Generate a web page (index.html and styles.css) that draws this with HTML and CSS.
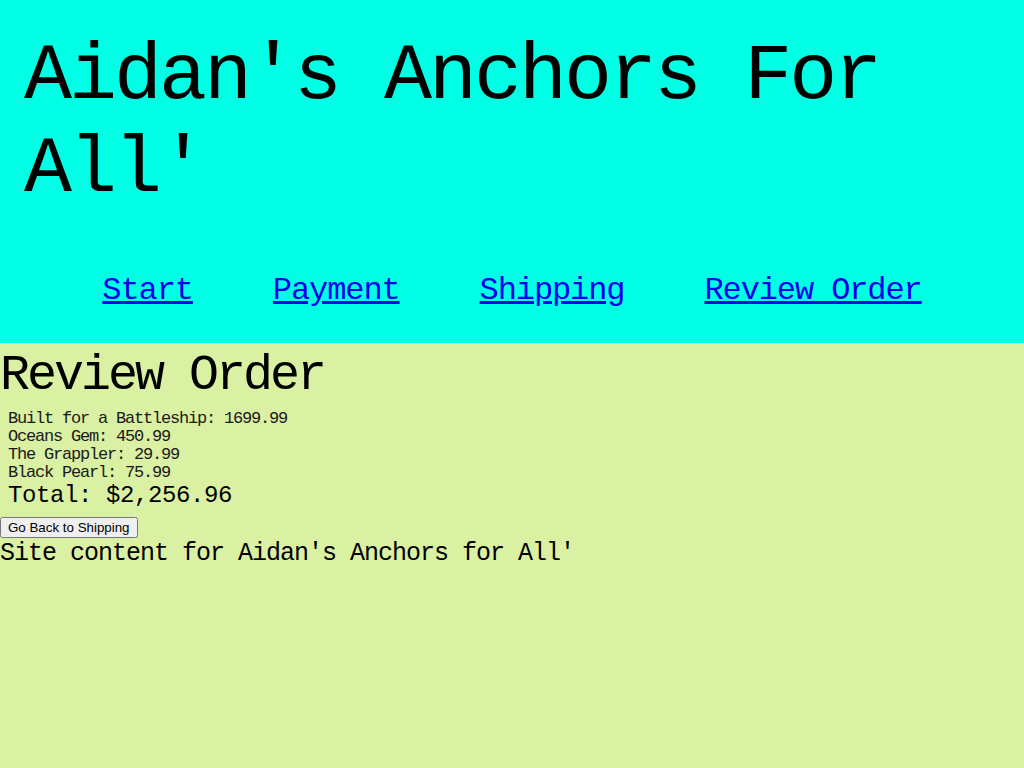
FILE: index.html
```html
<!DOCTYPE html>
<html lang="en">
<head>
<meta charset="utf-8">
<title>Aidan's Anchors For All'</title>
<link rel="stylesheet" href="styles.css">
</head>
<body>
<header class="site-header">
  <h1 class="site-title">Aidan's Anchors For All'</h1>
  <nav class="site-nav">
    <a href="#">Start</a>
    <a href="#">Payment</a>
    <a href="#">Shipping</a>
    <a href="#">Review Order</a>
  </nav>
</header>
<main class="content">
  <h2 class="page-title">Review Order</h2>
  <div class="order">
    <div class="order-item">Built for a Battleship: 1699.99</div>
    <div class="order-item">Oceans Gem: 450.99</div>
    <div class="order-item">The Grappler: 29.99</div>
    <div class="order-item">Black Pearl: 75.99</div>
    <div class="order-total">Total: $2,256.96</div>
  </div>
  <button class="back-btn" type="button">Go Back to Shipping</button>
  <p class="footer-text">Site content for Aidan's Anchors for All'</p>
</main>
</body>
</html>
```
FILE: styles.css
```css
html, body {
  margin: 0;
  padding: 0;
}
body {
  background: #daf0a2;
  font-family: "Liberation Mono", "DejaVu Sans Mono", monospace;
  color: #000;
  min-height: 768px;
}
.site-header {
  background: #00ffe4;
  padding: 30px 0 32px;
}
.site-title {
  margin: 0;
  padding: 0 24px;
  font-size: 80px;
  line-height: 93px;
  letter-spacing: -3px;
  font-weight: normal;
}
.site-nav {
  margin-top: 55px;
  display: flex;
  justify-content: center;
  gap: 80px;
  font-size: 32px;
  line-height: 40px;
  letter-spacing: -1.1px;
}
.site-nav a {
  color: #0000ee;
}
.content {
  padding-top: 3px;
}
.page-title {
  margin: 0;
  font-size: 50px;
  line-height: 60px;
  letter-spacing: -3px;
  font-weight: normal;
}
.order {
  padding: 4px 8px 0;
}
.order-item {
  font-size: 17px;
  line-height: 18px;
  letter-spacing: -1.2px;
  color: #1a1a1a;
}
.order-total {
  font-size: 24px;
  line-height: 28px;
  letter-spacing: -0.4px;
}
.back-btn {
  margin-top: 7px;
  display: block;
  font: 13.33px "Liberation Sans", Arial, sans-serif;
}
.footer-text {
  margin: 2px 0 0;
  font-size: 25px;
  line-height: 28px;
  letter-spacing: -1px;
}
```
